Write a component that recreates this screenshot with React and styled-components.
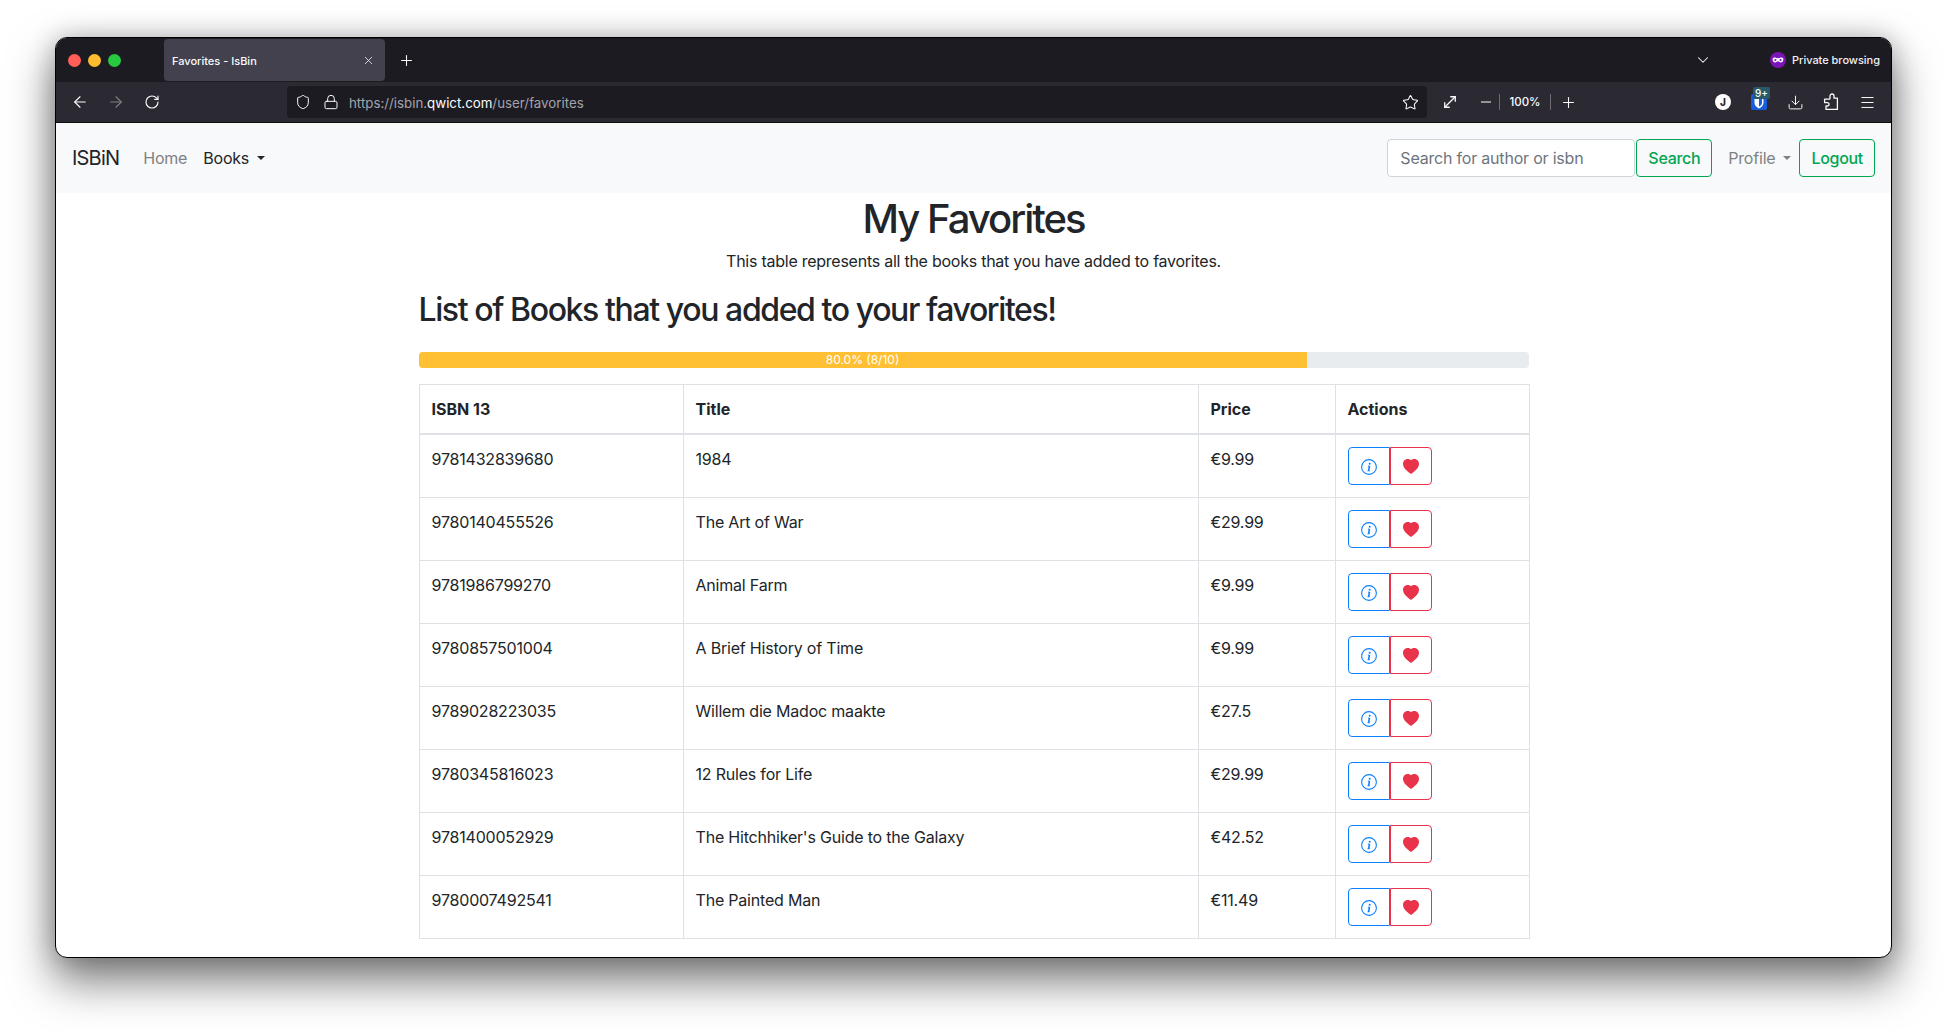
import React from 'react';
import styled, { createGlobalStyle } from 'styled-components';
import { ArrowLeft, ArrowRight, RotateCw, Shield, Lock, Star, MoveDiagonal, Minus, Plus, Download, Menu, ChevronDown, X } from 'lucide-react';
import { BsHeartFill } from 'react-icons/bs';

const GlobalStyle = createGlobalStyle`
  html, body { margin: 0; padding: 0; background: #fff; }
  * { box-sizing: border-box; }
  body { font-family: Inter, "Liberation Sans", sans-serif; color: #212529; }
`;

const Desktop = styled.div`
  width: 1947px;
  height: 1030px;
  padding: 37px 55px 0;
  overflow: hidden;
`;

const Window = styled.div`
  height: 921px;
  border-radius: 12px;
  border: 1px solid #000;
  background: #fff;
  overflow: hidden;
  box-shadow: 0 22px 44px 2px rgba(0, 0, 0, 0.5), 0 0 26px rgba(0, 0, 0, 0.22);
`;

const TabBar = styled.div`
  height: 44px;
  background: #1c1b22;
  display: flex;
  align-items: center;
  padding-left: 12px;
  color: #fbfbfe;
`;

const Lights = styled.div`
  display: flex;
  gap: 7px;
  width: 96px;
`;

const Light = styled.span`
  width: 13px;
  height: 13px;
  border-radius: 50%;
  background: ${(p) => p.$color};
`;

const Tab = styled.div`
  width: 221px;
  height: 42px;
  background: #42414d;
  border-radius: 4px;
  display: flex;
  align-items: center;
  justify-content: space-between;
  padding: 1px 10px 0 8px;
  font-size: 11px;
  font-weight: 500;
`;

const NewTab = styled.div`
  display: flex;
  margin-left: 13px;
`;

const TabSpacer = styled.div`
  flex: 1;
`;

const TabChevron = styled.div`
  display: flex;
  margin-right: 58px;
`;

const Private = styled.div`
  display: flex;
  align-items: center;
  gap: 6px;
  font-size: 11px;
  font-weight: 500;
  letter-spacing: -0.02px;
  padding-right: 11px;
  color: #f0f0f4;
`;

const ToolBar = styled.div`
  height: 41px;
  background: #2b2a33;
  display: flex;
  align-items: center;
  padding-left: 6px;
  color: #fbfbfe;
  border-bottom: 1px solid #0c0c0d;
`;

const ToolIcon = styled.div`
  width: ${(p) => p.$w || 36}px;
  height: 32px;
  flex: none;
  display: flex;
  align-items: center;
  justify-content: center;
  position: relative;
  opacity: ${(p) => (p.$dim ? 0.4 : 1)};
`;

const UrlBar = styled.div`
  width: 1140px;
  height: 32px;
  flex: none;
  margin-left: 117px;
  padding: 0 8px 0 2px;
  border-radius: 4px;
  background: #1c1b22;
  display: flex;
  align-items: center;
`;

const UrlIcon = styled.div`
  width: 28px;
  flex: none;
  display: flex;
  justify-content: center;
  margin-right: ${(p) => p.$mr || 0}px;
`;

const UrlText = styled.div`
  flex: 1;
  padding-top: 1px;
  font-size: 13.3px;
  color: #a3a3aa;
`;

const UrlHost = styled.span`
  color: #fbfbfe;
`;

const ZoomSep = styled.span`
  width: 1px;
  height: 16px;
  background: #6d6c75;
`;

const ZoomLabel = styled.span`
  width: 50px;
  flex: none;
  text-align: center;
  font-size: 11.5px;
  font-weight: 500;
`;

const Avatar = styled.span`
  width: 16px;
  height: 16px;
  border-radius: 50%;
  background: #fff;
  color: #2b2a33;
  font-size: 10px;
  font-weight: 800;
  display: flex;
  align-items: center;
  justify-content: center;
`;

const Warden = styled.span`
  width: 16px;
  height: 16px;
  border-radius: 2px;
  background: #175ddc;
  display: flex;
  align-items: center;
  justify-content: center;
`;

const Badge = styled.span`
  position: absolute;
  top: 1px;
  left: 12px;
  padding: 0 2px;
  background: #2a5a66;
  border-radius: 2px;
  color: #fff;
  font-size: 10px;
  line-height: 12px;
  font-weight: 500;
`;

const NavBar = styled.nav`
  height: 70px;
  background: #f8f9fa;
  display: flex;
  align-items: center;
  justify-content: space-between;
  padding: 0 16px;
  letter-spacing: -0.2px;
`;

const NavGroup = styled.div`
  display: flex;
  align-items: center;
`;

const Brand = styled.span`
  font-size: 20px;
  margin-right: 16px;
  letter-spacing: -0.8px;
  color: #212529;
`;

const NavLink = styled.span`
  padding: 8px;
  font-size: 16px;
  display: flex;
  align-items: center;
  color: ${(p) => (p.$active ? '#212529' : '#7f8183')};
`;

const ProfileLink = styled(NavLink)`
  margin-left: 8px;
`;

const Caret = styled.span`
  margin-left: 8px;
  border-top: 4.8px solid currentColor;
  border-left: 4.8px solid transparent;
  border-right: 4.8px solid transparent;
`;

const SearchInput = styled.input`
  width: 248px;
  height: 38px;
  padding: 6px 12px;
  font: inherit;
  font-size: 16px;
  letter-spacing: inherit;
  border: 1px solid #ced4da;
  border-radius: 4px;
  background: #fff;
  margin-right: 1px;
  &::placeholder { color: #6c757d; opacity: 1; }
`;

const OutlineButton = styled.button`
  height: 38px;
  padding: 0 11px;
  font: inherit;
  font-size: 16px;
  font-weight: 500;
  letter-spacing: -0.3px;
  color: #00a651;
  background: transparent;
  border: 1px solid #00a651;
  border-radius: 4px;
`;

const Main = styled.main`
  width: 1110px;
  margin: 0 auto;
`;

const Title = styled.h1`
  margin: 0 0 6px;
  padding-top: 2px;
  text-align: center;
  font-size: 40px;
  line-height: 48px;
  font-weight: 500;
  letter-spacing: -2px;
`;

const Lead = styled.p`
  margin: 0 0 18px;
  text-align: center;
  font-size: 16px;
  line-height: 24px;
  letter-spacing: -0.25px;
`;

const SubTitle = styled.h2`
  margin: 0 0 23px;
  font-size: 32px;
  line-height: 38px;
  font-weight: 500;
  letter-spacing: -1.4px;
`;

const Progress = styled.div`
  height: 16px;
  border-radius: 4px;
  background: #e9ecef;
  overflow: hidden;
  margin-bottom: 16px;
`;

const ProgressFill = styled.div`
  height: 100%;
  background: #ffc033;
  color: #fff;
  font-size: 12px;
  line-height: 16px;
  text-align: center;
`;

const Table = styled.table`
  width: 1110px;
  border-collapse: collapse;
  table-layout: fixed;
  font-size: 16px;
  line-height: 24px;
`;

const Th = styled.th`
  width: ${(p) => p.$w}px;
  padding: 12px;
  text-align: left;
  font-weight: 700;
  border: 1px solid #dee2e6;
  border-bottom-width: 2px;
`;

const Td = styled.td`
  padding: 12px;
  vertical-align: top;
  letter-spacing: -0.2px;
  border: 1px solid #dee2e6;
`;

const ButtonGroup = styled.div`
  display: flex;
`;

const ActionButton = styled.button`
  width: 42px;
  height: 38px;
  padding: 2px 0 0;
  display: flex;
  align-items: center;
  justify-content: center;
  background: transparent;
  color: ${(p) => p.$color};
  border: 1px solid ${(p) => p.$color};
  border-radius: ${(p) => (p.$first ? '4px 0 0 4px' : '0 4px 4px 0')};
`;

const books = [
  { isbn: '9781432839680', title: '1984', price: '€9.99' },
  { isbn: '9780140455526', title: 'The Art of War', price: '€29.99' },
  { isbn: '9781986799270', title: 'Animal Farm', price: '€9.99' },
  { isbn: '9780857501004', title: 'A Brief History of Time', price: '€9.99' },
  { isbn: '9789028223035', title: 'Willem die Madoc maakte', price: '€27.5' },
  { isbn: '9780345816023', title: '12 Rules for Life', price: '€29.99' },
  { isbn: '9781400052929', title: "The Hitchhiker's Guide to the Galaxy", price: '€42.52' },
  { isbn: '9780007492541', title: 'The Painted Man', price: '€11.49' },
];

const InfoIcon = () => (
  <svg width="16" height="16" viewBox="0 0 16 16" fill="none" stroke="currentColor">
    <circle cx="8" cy="8" r="7.4" strokeWidth="1.1" />
    <path d="M8.5 7 7.6 11.8" strokeWidth="1.6" />
    <path d="M6.9 7.1h1.6M6.5 11.8h2.2" strokeWidth="0.9" />
    <circle cx="8.7" cy="4.7" r="1" fill="currentColor" stroke="none" />
  </svg>
);

const MaskIcon = () => (
  <svg width="16" height="16" viewBox="0 0 16 16">
    <circle cx="8" cy="8" r="8" fill="#7a14b4" />
    <path d="M2.6 7.2c0-1.4 1.4-1.8 2.6-1.6 1 .2 1.8.7 2.8.7s1.8-.5 2.8-.7c1.2-.2 2.6.2 2.6 1.6 0 2-1 3.2-2.6 3.2-1.2 0-2-1.2-2.8-1.2s-1.6 1.2-2.8 1.2c-1.6 0-2.6-1.2-2.6-3.2z" fill="#fff" />
    <circle cx="5.4" cy="8" r="1.1" fill="#7a14b4" />
    <circle cx="10.6" cy="8" r="1.1" fill="#7a14b4" />
  </svg>
);

const WardenShield = () => (
  <svg width="12" height="13" viewBox="0 0 12 13">
    <path d="M1.5 1h9v6c0 2.6-2.2 4.4-4.5 5.4C3.7 11.4 1.5 9.6 1.5 7z" fill="#fff" />
    <path d="M6 1h3v6c0 1.6-1.4 2.8-3 3.6z" fill="#175ddc" />
  </svg>
);

const PuzzleIcon = () => (
  <svg width="16" height="18" viewBox="0 0 16 18" fill="none" stroke="currentColor" strokeWidth="1.3" strokeLinejoin="round">
    <path d="M7 4.4V3a2 2 0 0 1 4 0v2.2h3.4v11.2H3V13h1.4a1.7 1.7 0 0 0 0-3.4H1.6V6.2h4.6A.9.9 0 0 0 7 5.4z" />
  </svg>
);

const BookRow = ({ book }) => (
  <tr>
    <Td>{book.isbn}</Td>
    <Td>{book.title}</Td>
    <Td>{book.price}</Td>
    <Td>
      <ButtonGroup>
        <ActionButton $first $color="#0b80ff"><InfoIcon /></ActionButton>
        <ActionButton $color="#e8334a"><BsHeartFill size={16} /></ActionButton>
      </ButtonGroup>
    </Td>
  </tr>
);

const App = () => (
  <Desktop>
    <GlobalStyle />
    <Window>
      <TabBar>
        <Lights>
          <Light $color="#ff5f57" />
          <Light $color="#febc2e" />
          <Light $color="#28c840" />
        </Lights>
        <Tab>
          Favorites - IsBin
          <X size={13} strokeWidth={1.4} />
        </Tab>
        <NewTab><Plus size={17} strokeWidth={1.5} /></NewTab>
        <TabSpacer />
        <TabChevron><ChevronDown size={18} strokeWidth={1.4} /></TabChevron>
        <Private><MaskIcon />Private browsing</Private>
      </TabBar>
      <ToolBar>
        <ToolIcon><ArrowLeft size={18} strokeWidth={1.5} /></ToolIcon>
        <ToolIcon $dim><ArrowRight size={18} strokeWidth={1.5} /></ToolIcon>
        <ToolIcon><RotateCw size={16} strokeWidth={1.7} /></ToolIcon>
        <UrlBar>
          <UrlIcon><Shield size={16} strokeWidth={1.5} /></UrlIcon>
          <UrlIcon $mr={4}><Lock size={16} strokeWidth={1.5} /></UrlIcon>
          <UrlText>https://isbin.<UrlHost>qwict.com</UrlHost>/user/favorites</UrlText>
          <Star size={17} strokeWidth={1.5} />
        </UrlBar>
        <ToolIcon $w={46}><MoveDiagonal size={18} strokeWidth={1.7} /></ToolIcon>
        <ToolIcon $w={26}><Minus size={16} strokeWidth={1.5} /></ToolIcon>
        <ZoomSep />
        <ZoomLabel>100%</ZoomLabel>
        <ZoomSep />
        <ToolIcon $w={35}><Plus size={17} strokeWidth={1.5} /></ToolIcon>
        <ToolIcon $w={119} />
        <ToolIcon><Avatar>J</Avatar></ToolIcon>
        <ToolIcon><Warden><WardenShield /></Warden><Badge>9+</Badge></ToolIcon>
        <ToolIcon><Download size={17} strokeWidth={1.4} /></ToolIcon>
        <ToolIcon><PuzzleIcon /></ToolIcon>
        <ToolIcon><Menu size={17} strokeWidth={1.4} /></ToolIcon>
      </ToolBar>
      <NavBar>
        <NavGroup>
          <Brand>ISBiN</Brand>
          <NavLink>Home</NavLink>
          <NavLink $active>Books<Caret /></NavLink>
        </NavGroup>
        <NavGroup>
          <SearchInput placeholder="Search for author or isbn" />
          <OutlineButton>Search</OutlineButton>
          <ProfileLink>Profile<Caret /></ProfileLink>
          <OutlineButton>Logout</OutlineButton>
        </NavGroup>
      </NavBar>
      <Main>
        <Title>My Favorites</Title>
        <Lead>This table represents all the books that you have added to favorites.</Lead>
        <SubTitle>List of Books that you added to your favorites!</SubTitle>
        <Progress>
          <ProgressFill style={{ width: `${(8 / 10) * 100}%` }}>80.0% (8/10)</ProgressFill>
        </Progress>
        <Table>
          <thead>
            <tr>
              <Th $w={264}>ISBN 13</Th>
              <Th $w={515}>Title</Th>
              <Th $w={137}>Price</Th>
              <Th $w={194}>Actions</Th>
            </tr>
          </thead>
          <tbody>
            {books.map((book) => <BookRow key={book.isbn} book={book} />)}
          </tbody>
        </Table>
      </Main>
    </Window>
  </Desktop>
);

export default App;
